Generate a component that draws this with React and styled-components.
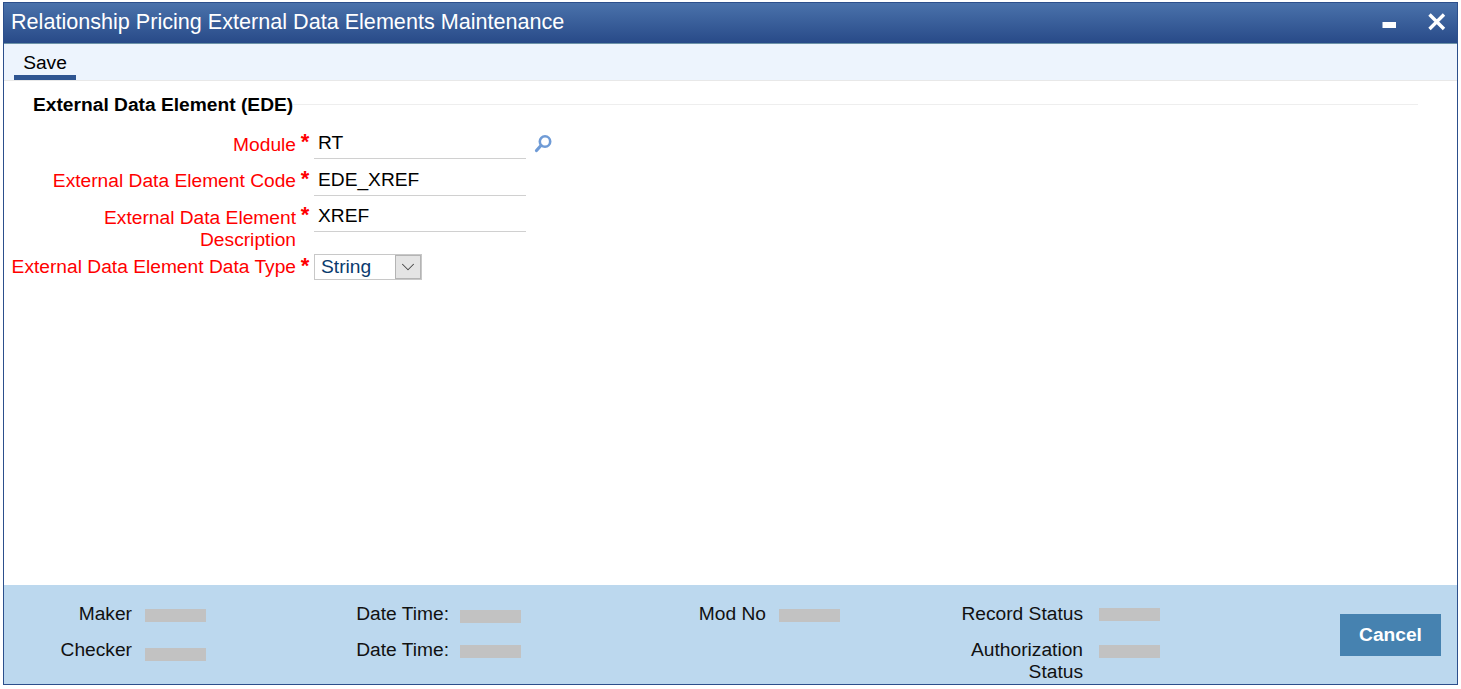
import React from "react";
import styled, { createGlobalStyle } from "styled-components";
import { ChevronDown } from "lucide-react";

const GlobalStyle = createGlobalStyle`
  html, body {
    margin: 0;
    padding: 0;
    background: #fff;
    font-family: "Liberation Sans", Arial, sans-serif;
  }
`;

const Page = styled.div`
  width: 1461px;
  height: 689px;
  padding: 2px 3px 4px 3px;
  box-sizing: border-box;
`;

const Window = styled.div`
  height: 100%;
  display: flex;
  flex-direction: column;
  box-sizing: border-box;
  border: 1px solid #2c4f8c;
`;

const TitleBar = styled.div`
  height: 41px;
  flex: none;
  display: flex;
  align-items: center;
  justify-content: space-between;
  padding: 0 10px 3px 7px;
  box-sizing: border-box;
  background: linear-gradient(#4a72ab, #284a88);
  border-bottom: 1px solid #6d93a8;
  color: #fff;
`;

const Title = styled.h1`
  margin: 0;
  font-size: 21.6px;
  font-weight: 400;
  line-height: 24px;
`;

const WindowControls = styled.div`
  display: flex;
  align-items: center;
  gap: 30px;
`;

const ControlIcon = styled.svg`
  display: block;
  width: 20px;
  height: 20px;
`;

const Toolbar = styled.div`
  height: 37px;
  flex: none;
  display: flex;
  padding-left: 10px;
  box-sizing: border-box;
  background: #edf4fd;
  border-bottom: 1px solid #e8e8e8;
`;

const ToolButton = styled.button`
  width: 62px;
  height: 36px;
  padding: 7px 0 0;
  border: 0;
  border-bottom: 5px solid #2f5591;
  background: none;
  font: 400 19.2px "Liberation Sans", Arial, sans-serif;
  color: #000;
`;

const Content = styled.main`
  flex: 1;
  padding: 11px 39px 0 29px;
`;

const SectionHeader = styled.div`
  display: flex;
  align-items: center;
  height: 24px;
  margin-bottom: 11px;
`;

const SectionTitle = styled.h2`
  margin: 2px 0 0;
  font-size: 19.2px;
  font-weight: 700;
  line-height: 22px;
  white-space: nowrap;
  color: #000;
`;

const SectionRule = styled.div`
  flex: 1;
  height: 1px;
  background: #eee;
`;

const Form = styled.div`
  margin-left: -29px;
  display: flex;
  flex-direction: column;
`;

const Row = styled.div`
  display: grid;
  grid-template-columns: 292px 18px auto;
  height: ${(p) => p.$height}px;
`;

const Label = styled.label`
  font-size: 19.2px;
  line-height: 22px;
  padding-top: ${(p) => p.$top}px;
  padding-left: ${(p) => (p.$wrap ? "70px" : "0")};
  color: #f00;
  text-align: right;
`;

const Asterisk = styled.span`
  font-size: 22px;
  font-weight: 700;
  line-height: 24px;
  padding-top: ${(p) => p.$top}px;
  text-align: center;
  color: #f00;
`;

const InputWrap = styled.div`
  display: flex;
  align-items: flex-start;
`;

const TextInput = styled.input`
  width: 212px;
  height: 32px;
  padding: 0 4px;
  box-sizing: border-box;
  border: 0;
  border-bottom: 1px solid #d0d0d0;
  background: #fff;
  font: 400 19.2px "Liberation Sans", Arial, sans-serif;
  color: #000;
  outline: none;
`;

const SearchIcon = styled.svg`
  width: 20px;
  height: 20px;
  margin: 7px 0 0 8px;
`;

const Select = styled.div`
  width: 108px;
  height: 26px;
  display: flex;
  box-sizing: border-box;
  border: 1px solid #c8c8c8;
  background: #fff;
`;

const SelectValue = styled.span`
  flex: 1;
  padding-left: 6px;
  font-size: 19.2px;
  line-height: 24px;
  color: #0a3a6e;
`;

const SelectArrow = styled.span`
  width: 26px;
  display: flex;
  align-items: center;
  justify-content: center;
  box-sizing: border-box;
  border: 1px solid #b4b4b4;
  background: #e4e4e4;
  color: #444;
`;

const Footer = styled.footer`
  height: 99px;
  flex: none;
  display: flex;
  box-sizing: border-box;
  background: #bcd8ee;
`;

const FooterColumn = styled.div`
  width: ${(p) => p.$width}px;
  padding-top: 18px;
  display: grid;
  grid-template-rows: 36px auto;
  align-content: start;
`;

const FooterRow = styled.div`
  display: grid;
  grid-template-columns: ${(p) => p.$label}px 1fr;
  column-gap: ${(p) => p.$gap}px;
  align-items: start;
`;

const FooterLabel = styled.span`
  font-size: 19.2px;
  line-height: 22px;
  text-align: right;
  justify-self: end;
  max-width: 125px;
  color: #111;
`;

const FooterValue = styled.span`
  width: 61px;
  height: 13px;
  margin-top: ${(p) => p.$top}px;
  background: #c2c2c2;
`;

const CancelSlot = styled.div`
  flex: 1;
  display: flex;
  padding-right: 16px;
  align-items: flex-start;
`;

const CancelButton = styled.button`
  width: 101px;
  height: 42px;
  margin: 29px 0 0 auto;
  border: 0;
  background: #4682b0;
  color: #fff;
  font: 700 19.2px "Liberation Sans", Arial, sans-serif;
`;

function FooterField({ label, top, labelWidth, gap }) {
  return (
    <FooterRow $label={labelWidth} $gap={gap}>
      <FooterLabel>{label}</FooterLabel>
      <FooterValue $top={top} />
    </FooterRow>
  );
}

export default function App() {
  return (
    <Page>
      <GlobalStyle />
      <Window>
        <TitleBar>
          <Title>Relationship Pricing External Data Elements Maintenance</Title>
          <WindowControls>
            <ControlIcon viewBox="0 0 20 20">
              <rect x="5.5" y="10" width="13.5" height="6" fill="#fff" />
            </ControlIcon>
            <ControlIcon viewBox="0 0 20 20">
              <path d="M2.5 2.5 L17 17 M17 2.5 L2.5 17" stroke="#fff" strokeWidth="3.4" fill="none" />
            </ControlIcon>
          </WindowControls>
        </TitleBar>
        <Toolbar>
          <ToolButton>Save</ToolButton>
        </Toolbar>
        <Content>
          <SectionHeader>
            <SectionTitle>External Data Element (EDE)</SectionTitle>
            <SectionRule />
          </SectionHeader>
          <Form>
            <Row $height={37}>
              <Label $top={7}>Module</Label>
              <Asterisk $top={3}>*</Asterisk>
              <InputWrap>
                <TextInput defaultValue="RT" readOnly />
                <SearchIcon viewBox="0 0 20 20">
                  <circle cx="11" cy="7.5" r="5.2" fill="none" stroke="#6f9bd6" strokeWidth="2.6" />
                  <path d="M7 11.5 L2.5 16.5" stroke="#6f9bd6" strokeWidth="3.2" strokeLinecap="round" />
                </SearchIcon>
              </InputWrap>
            </Row>
            <Row $height={36}>
              <Label $top={6}>External Data Element Code</Label>
              <Asterisk $top={3}>*</Asterisk>
              <InputWrap>
                <TextInput defaultValue="EDE_XREF" readOnly />
              </InputWrap>
            </Row>
            <Row $height={54}>
              <Label $top={7} $wrap>External Data Element Description</Label>
              <Asterisk $top={3}>*</Asterisk>
              <InputWrap>
                <TextInput defaultValue="XREF" readOnly />
              </InputWrap>
            </Row>
            <Row $height={30}>
              <Label $top={2}>External Data Element Data Type</Label>
              <Asterisk $top={0}>*</Asterisk>
              <InputWrap>
                <Select>
                  <SelectValue>String</SelectValue>
                  <SelectArrow>
                    <ChevronDown size={22} strokeWidth={1.1} />
                  </SelectArrow>
                </Select>
              </InputWrap>
            </Row>
          </Form>
        </Content>
        <Footer>
          <FooterColumn $width={300}>
            <FooterField label="Maker" top={6} labelWidth={128} gap={13} />
            <FooterField label="Checker" top={9} labelWidth={128} gap={13} />
          </FooterColumn>
          <FooterColumn $width={343}>
            <FooterField label="Date Time:" top={7} labelWidth={145} gap={11} />
            <FooterField label="Date Time:" top={6} labelWidth={145} gap={11} />
          </FooterColumn>
          <FooterColumn $width={263}>
            <FooterField label="Mod No" top={6} labelWidth={119} gap={13} />
          </FooterColumn>
          <FooterColumn $width={250}>
            <FooterField label="Record Status" top={5} labelWidth={173} gap={16} />
            <FooterField label="Authorization Status" top={6} labelWidth={173} gap={16} />
          </FooterColumn>
          <CancelSlot>
            <CancelButton>Cancel</CancelButton>
          </CancelSlot>
        </Footer>
      </Window>
    </Page>
  );
}
